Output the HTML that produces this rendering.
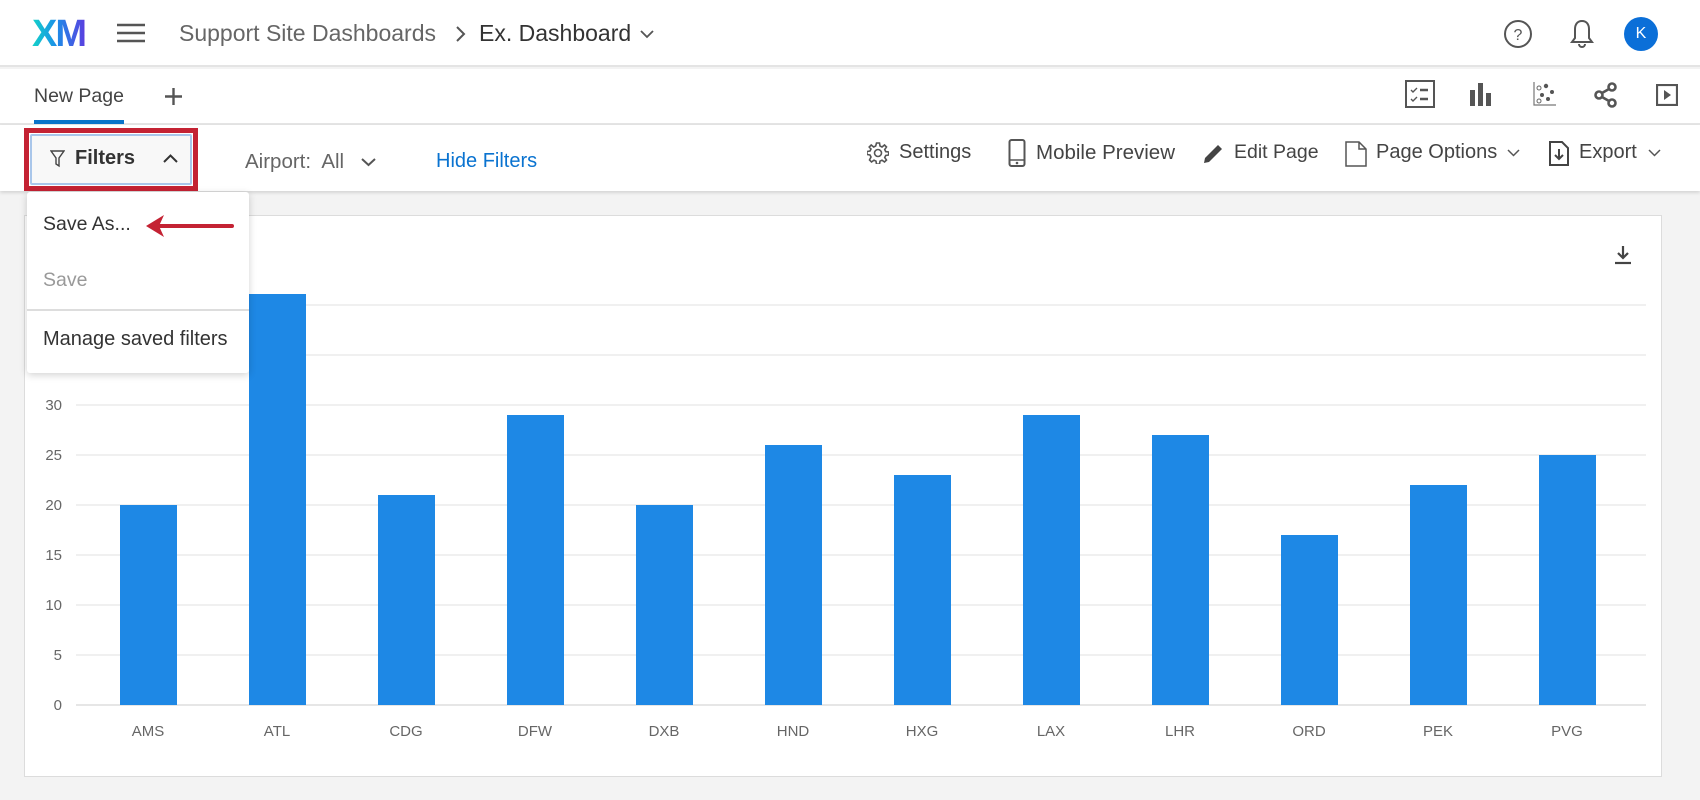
<!DOCTYPE html>
<html><head><meta charset="utf-8"><style>
*{margin:0;padding:0;box-sizing:border-box}
body{width:1700px;height:800px;overflow:hidden;background:#f3f3f3;font-family:"Liberation Sans",sans-serif;position:relative;color:#333}
.a{position:absolute;white-space:nowrap}
</style></head><body>
<!-- header -->
<div class="a" style="left:0;top:0;width:1700px;height:67px;background:#fff;border-bottom:2px solid #e4e4e4"></div>
<div class="a" style="left:32px;top:15px;font-size:38px;font-weight:bold;letter-spacing:-2px;background:linear-gradient(90deg,#13d3c8,#1b8fe8 45%,#5a3fe0);-webkit-background-clip:text;color:transparent;line-height:38px">XM</div>
<svg class="a" style="left:117px;top:23px" width="28" height="20"><g stroke="#555" stroke-width="2.6"><line x1="0" y1="2" x2="28" y2="2"/><line x1="0" y1="10" x2="28" y2="10"/><line x1="0" y1="18" x2="28" y2="18"/></g></svg>
<div class="a" style="left:179px;top:20px;font-size:23px;color:#666">Support Site Dashboards</div>
<svg class="a" style="left:455px;top:26px" width="12" height="16"><path d="M2 1l7 7-7 7" fill="none" stroke="#555" stroke-width="2"/></svg>
<div class="a" style="left:479px;top:20px;font-size:23px;color:#333">Ex. Dashboard</div>
<svg class="a" style="left:640px;top:29px" width="14" height="10"><path d="M1 2l6 6 6-6" fill="none" stroke="#555" stroke-width="1.8"/></svg>
<svg class="a" style="left:1503px;top:19px" width="30" height="30"><circle cx="15" cy="15" r="13" fill="none" stroke="#555" stroke-width="2"/><text x="15" y="21" font-size="16" text-anchor="middle" fill="#555" font-family="Liberation Sans">?</text></svg>
<svg class="a" style="left:1569px;top:18px" width="26" height="32"><path d="M13 3c-5 0-7 4-7 8v9l-3 4h20l-3-4v-9c0-4-2-8-7-8z M10 26a3 3 0 0 0 6 0" fill="none" stroke="#555" stroke-width="2"/></svg>
<div class="a" style="left:1624px;top:17px;width:34px;height:34px;border-radius:50%;background:#0b6fd8;color:#fff;font-size:16px;text-align:center;line-height:34px">K</div>
<!-- tabs -->
<div class="a" style="left:0;top:69px;width:1700px;height:56px;background:#fff;border-bottom:2px solid #e4e4e4"></div>
<div class="a" style="left:34px;top:85px;font-size:19.5px;color:#444">New Page</div>
<div class="a" style="left:34px;top:120px;width:90px;height:4px;background:#0a73c9"></div>
<svg class="a" style="left:165px;top:88px" width="17" height="17"><g stroke="#555" stroke-width="2.4"><line x1="8.5" y1="0" x2="8.5" y2="17"/><line x1="0" y1="8.5" x2="17" y2="8.5"/></g></svg>
<svg class="a" style="left:1405px;top:80px" width="30" height="28"><rect x="1" y="1" width="28" height="26" fill="none" stroke="#555" stroke-width="2"/><path d="M6 10l2 2 4-4M6 19l2 2 4-4" fill="none" stroke="#555" stroke-width="1.4"/><path d="M15 10h8M15 19h8" stroke="#555" stroke-width="2.4"/></svg>
<svg class="a" style="left:1469px;top:82px" width="24" height="24"><rect x="1" y="8" width="5" height="16" fill="#555"/><rect x="9" y="1" width="5" height="23" fill="#555"/><rect x="17" y="11" width="5" height="13" fill="#555"/></svg>
<svg class="a" style="left:1533px;top:82px" width="24" height="24"><path d="M1 0v23h22" fill="none" stroke="#777" stroke-width="1.2"/><circle cx="6" cy="6" r="2" fill="none" stroke="#666"/><circle cx="13" cy="4" r="2.2" fill="#555"/><circle cx="19" cy="10" r="2" fill="#555"/><circle cx="9" cy="13" r="2" fill="#555"/><circle cx="6" cy="19" r="2" fill="none" stroke="#666"/><circle cx="15" cy="17" r="2" fill="#555"/></svg>
<svg class="a" style="left:1594px;top:82px" width="24" height="26"><g fill="none" stroke="#555" stroke-width="2.6"><circle cx="18" cy="5" r="3.5"/><circle cx="5" cy="13" r="3.5"/><circle cx="18" cy="21" r="3.5"/><path d="M8 11l7-4M8 15l7 4"/></g></svg>
<svg class="a" style="left:1656px;top:84px" width="22" height="22"><rect x="1" y="1" width="20" height="20" fill="none" stroke="#555" stroke-width="2.2"/><path d="M8 6v10l7-5z" fill="#555"/></svg>
<!-- filter bar -->
<div class="a" style="left:0;top:125px;width:1700px;height:66px;background:#fff;box-shadow:0 2px 3px rgba(0,0,0,.12)"></div>
<div class="a" style="left:24px;top:128px;width:174px;height:63px;border:5px solid #c42233"></div>
<div class="a" style="left:30px;top:134px;width:162px;height:51px;background:#f8f8f8;border:2px solid #a9c6ea;border-radius:2px"></div>
<svg class="a" style="left:50px;top:150px" width="15" height="18"><path d="M1 1h13l-5 7v8l-3-2v-6z" fill="none" stroke="#444" stroke-width="1.4"/></svg>
<div class="a" style="left:75px;top:147px;font-size:20px;font-weight:bold;color:#333">Filters</div>
<svg class="a" style="left:163px;top:154px" width="15" height="10"><path d="M1 8l6.5-6.5L14 8" fill="none" stroke="#333" stroke-width="2"/></svg>
<div class="a" style="left:245px;top:150px;font-size:20.5px;color:#666">Airport:&nbsp; All</div>
<svg class="a" style="left:361px;top:157px" width="15" height="10"><path d="M1 2l6.5 6 6.5-6" fill="none" stroke="#555" stroke-width="2"/></svg>
<div class="a" style="left:436px;top:150px;font-size:20px;color:#0a73d0">Hide Filters</div>
<svg class="a" style="left:867px;top:142px" width="22" height="22"><g fill="none" stroke="#555" stroke-width="1.6"><circle cx="11" cy="11" r="3.5"/><path d="M9.5 1h3l.5 3 2 1 2.5-2 2 2-1.8 2.6 1 2 3 .4v3l-3 .5-1 2 1.8 2.5-2 2-2.5-1.8-2 1-.5 3h-3l-.5-3-2-1-2.5 1.8-2-2L4 15l-1-2-3-.5v-3l3-.5 1-2L2.2 5l2-2L6.7 5l2-1z"/></g></svg>
<div class="a" style="left:899px;top:141px;font-size:20px;color:#444">Settings</div>
<svg class="a" style="left:1008px;top:139px" width="18" height="28"><rect x="1.5" y="1" width="15" height="26" rx="2" fill="none" stroke="#555" stroke-width="2"/><line x1="2" y1="21" x2="16" y2="21" stroke="#555" stroke-width="1.5"/><circle cx="9" cy="24" r="1.3" fill="#555"/></svg>
<div class="a" style="left:1036px;top:141px;font-size:20.5px;color:#444">Mobile Preview</div>
<svg class="a" style="left:1203px;top:143px" width="21" height="21"><path d="M1 20l1-5L15 2l4 4L6 19z" fill="#444"/></svg>
<div class="a" style="left:1234px;top:141px;font-size:19.5px;color:#444">Edit Page</div>
<svg class="a" style="left:1345px;top:141px" width="22" height="26"><path d="M1 1h13l7 7v17H1z M14 1v7h7" fill="none" stroke="#555" stroke-width="1.5"/></svg>
<div class="a" style="left:1376px;top:141px;font-size:20px;color:#444">Page Options</div>
<svg class="a" style="left:1507px;top:149px" width="13" height="8"><path d="M1 1l5.5 5.5L12 1" fill="none" stroke="#555" stroke-width="1.5"/></svg>
<svg class="a" style="left:1549px;top:141px" width="20" height="25"><path d="M1 1h12l6 6v17H1z" fill="none" stroke="#444" stroke-width="2"/><path d="M10 8v10M6 14l4 4 4-4" fill="none" stroke="#444" stroke-width="2"/></svg>
<div class="a" style="left:1579px;top:141px;font-size:20px;color:#444">Export</div>
<svg class="a" style="left:1648px;top:149px" width="13" height="8"><path d="M1 1l5.5 5.5L12 1" fill="none" stroke="#555" stroke-width="1.5"/></svg>
<!-- chart card -->
<div class="a" style="left:24px;top:215px;width:1638px;height:562px;background:#fff;border:1px solid #dcdcdc"></div>
<svg class="a" style="left:1614px;top:245px" width="18" height="20"><path d="M9 1v11M4 8l5 5 5-5" fill="none" stroke="#444" stroke-width="2.2"/><line x1="1" y1="18" x2="17" y2="18" stroke="#444" stroke-width="2.2"/></svg>
<svg class="a" style="left:0;top:0" width="1700" height="800" font-family="Liberation Sans" font-size="15" fill="#666">
<g stroke="#e2e2e2" stroke-width="1">
<line x1="76" x2="1646" y1="305" y2="305"/><line x1="76" x2="1646" y1="355" y2="355"/><line x1="76" x2="1646" y1="405" y2="405"/><line x1="76" x2="1646" y1="455" y2="455"/><line x1="76" x2="1646" y1="505" y2="505"/><line x1="76" x2="1646" y1="555" y2="555"/><line x1="76" x2="1646" y1="605" y2="605"/><line x1="76" x2="1646" y1="655" y2="655"/><line x1="76" x2="1646" y1="705" y2="705" stroke="#ccc"/>
</g>
<g text-anchor="end"><text x="62" y="410">30</text><text x="62" y="460">25</text><text x="62" y="510">20</text><text x="62" y="560">15</text><text x="62" y="610">10</text><text x="62" y="660">5</text><text x="62" y="710">0</text></g>
<g fill="#1e88e5">
<rect x="120" y="505" width="57" height="200"/><rect x="249" y="294" width="57" height="411"/><rect x="378" y="495" width="57" height="210"/><rect x="507" y="415" width="57" height="290"/><rect x="636" y="505" width="57" height="200"/><rect x="765" y="445" width="57" height="260"/><rect x="894" y="475" width="57" height="230"/><rect x="1023" y="415" width="57" height="290"/><rect x="1152" y="435" width="57" height="270"/><rect x="1281" y="535" width="57" height="170"/><rect x="1410" y="485" width="57" height="220"/><rect x="1539" y="455" width="57" height="250"/>
</g>
<g text-anchor="middle"><text x="148" y="736">AMS</text><text x="277" y="736">ATL</text><text x="406" y="736">CDG</text><text x="535" y="736">DFW</text><text x="664" y="736">DXB</text><text x="793" y="736">HND</text><text x="922" y="736">HXG</text><text x="1051" y="736">LAX</text><text x="1180" y="736">LHR</text><text x="1309" y="736">ORD</text><text x="1438" y="736">PEK</text><text x="1567" y="736">PVG</text></g>
</svg>
<!-- dropdown -->
<div class="a" style="left:27px;top:192px;width:222px;height:181px;background:#fff;border-radius:3px;box-shadow:0 2px 8px rgba(0,0,0,.18)"></div>
<div class="a" style="left:43px;top:213px;font-size:19.5px;color:#333">Save As...</div>
<svg class="a" style="left:144px;top:213px" width="90" height="26"><path d="M14 13H88" stroke="#c42233" stroke-width="4" stroke-linecap="round"/><path d="M2 13L20 2 15 13 20 24z" fill="#c42233"/></svg>
<div class="a" style="left:43px;top:269px;font-size:19.5px;color:#999">Save</div>
<div class="a" style="left:27px;top:309px;width:222px;height:2px;background:#ddd"></div>
<div class="a" style="left:43px;top:328px;font-size:20px;color:#333">Manage saved filters</div>
</body></html>
